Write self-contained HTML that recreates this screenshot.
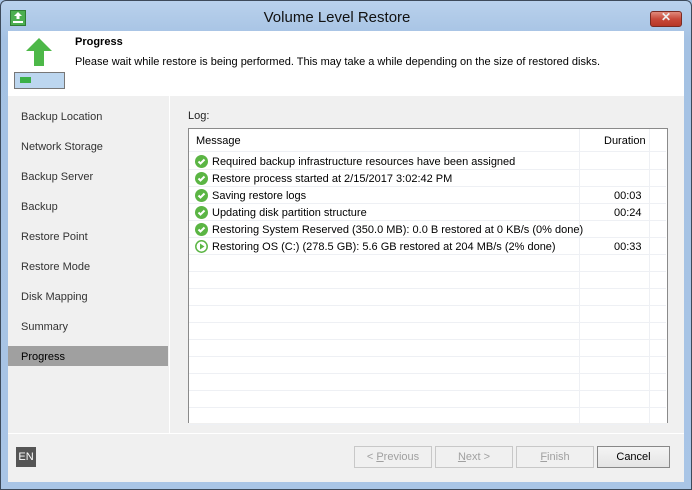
<!DOCTYPE html>
<html><head><style>
*{margin:0;padding:0;box-sizing:border-box}
body{width:692px;height:490px;font-family:"Liberation Sans",sans-serif;font-size:11px;color:#000;position:relative;overflow:hidden;background:#a9c5e6}
.a{position:absolute}
.frame{left:0;top:0;width:692px;height:490px;border:1px solid #3d4a5a;border-radius:6px 6px 0 0;background:linear-gradient(#b9d1ec,#a4c1e3 40px,#a9c5e6)}
.title{left:-9px;top:9px;width:692px;text-align:center;font-size:15px;color:#111}
.nav{left:21px;color:#333;font-size:11px}
.btn{top:446px;width:78px;height:22px;border:1px solid #c8c8c8;background:#f0f0f0;color:#a0a0a0;text-align:center;line-height:20px;font-size:11px}
.row{left:189px;width:477px;height:17px;border-bottom:1px solid #eef0f4}
.msg{left:212px;font-size:11px;line-height:17px;margin-top:1px}
.dur{left:614px;line-height:17px;margin-top:1px}
.ic{left:195px;width:13px;height:13px;border-radius:50%;background:#5bb544}
</style></head><body>
<div class="a frame"></div>
<div class="a" style="left:10px;top:10px;width:16px;height:16px;background:#4caf50;border:1px solid #2f7d34"></div>
<svg class="a" style="left:10px;top:10px" width="16" height="16"><path d="M8 2 L4 6 H6.5 V9 H9.5 V6 H12 Z" fill="#fff"/><rect x="3" y="11" width="10" height="2" fill="#fff"/></svg>
<div class="a title">Volume Level Restore</div>
<div class="a" style="left:650px;top:11px;width:32px;height:16px;border:1px solid #7a2a22;border-radius:3px;background:linear-gradient(#e08a7c,#c8493a 50%,#b73727)"></div>
<div class="a" style="left:650px;top:10px;width:32px;text-align:center;color:#eee;font-weight:bold;font-size:12px">✕</div>
<div class="a" style="left:8px;top:31px;width:676px;height:451px;background:#f0f0f0"></div>
<div class="a" style="left:8px;top:31px;width:676px;height:65px;background:#fff"></div>
<svg class="a" style="left:24px;top:37px" width="30" height="30"><path d="M15 1 L2 14 H10 V29 H20 V14 H28 Z" fill="#4db848"/></svg>
<div class="a" style="left:14px;top:72px;width:51px;height:17px;border:1px solid #777;background:#bcd6ef"></div>
<div class="a" style="left:20px;top:77px;width:11px;height:6px;background:#3bb048"></div>
<div class="a" style="left:75px;top:36px;font-weight:bold;font-size:11px">Progress</div>
<div class="a" style="left:75px;top:56px">Please wait while restore is being performed. This may take a while depending on the size of restored disks.</div>
<div class="a" style="left:169px;top:96px;width:1px;height:338px;background:#fff"></div>
<div class="a nav" style="top:111px">Backup Location</div>
<div class="a nav" style="top:141px">Network Storage</div>
<div class="a nav" style="top:171px">Backup Server</div>
<div class="a nav" style="top:201px">Backup</div>
<div class="a nav" style="top:231px">Restore Point</div>
<div class="a nav" style="top:261px">Restore Mode</div>
<div class="a nav" style="top:291px">Disk Mapping</div>
<div class="a nav" style="top:321px">Summary</div>
<div class="a" style="left:8px;top:346px;width:160px;height:20px;background:#a0a0a0"></div>
<div class="a nav" style="top:351px;color:#000">Progress</div>
<div class="a" style="left:188px;top:110px;color:#222">Log:</div>
<div class="a" style="left:188px;top:128px;width:480px;height:295px;border:1px solid #8a8a8a;border-bottom:none;background:#fff"></div>
<div class="a" style="left:579px;top:129px;width:1px;height:294px;background:#eef0f4"></div>
<div class="a" style="left:649px;top:129px;width:1px;height:294px;background:#eef0f4"></div>
<div class="a" style="left:189px;top:129px;width:477px;height:23px;border-bottom:1px solid #eef0f4"></div>
<div class="a" style="left:196px;top:135px">Message</div>
<div class="a" style="left:604px;top:135px">Duration</div>
<div class="a row" style="top:153px"></div><div class="a row" style="top:170px"></div><div class="a row" style="top:187px"></div><div class="a row" style="top:204px"></div><div class="a row" style="top:221px"></div><div class="a row" style="top:238px"></div><div class="a row" style="top:255px"></div><div class="a row" style="top:272px"></div><div class="a row" style="top:289px"></div><div class="a row" style="top:306px"></div><div class="a row" style="top:323px"></div><div class="a row" style="top:340px"></div><div class="a row" style="top:357px"></div><div class="a row" style="top:374px"></div><div class="a row" style="top:391px"></div><div class="a row" style="top:408px"></div>
<div class="a ic" style="top:155px"></div><div class="a ic" style="top:172px"></div><div class="a ic" style="top:189px"></div><div class="a ic" style="top:206px"></div><div class="a ic" style="top:223px"></div>
<svg class="a" style="left:195px;top:155px" width="13" height="90"><g fill="none" stroke="#fff" stroke-width="2"><path d="M3.5 6.5 L5.5 8.5 L9.5 4.5"/><path d="M3.5 23.5 L5.5 25.5 L9.5 21.5"/><path d="M3.5 40.5 L5.5 42.5 L9.5 38.5"/><path d="M3.5 57.5 L5.5 59.5 L9.5 55.5"/><path d="M3.5 74.5 L5.5 76.5 L9.5 72.5"/></g></svg>
<svg class="a" style="left:195px;top:240px" width="13" height="13"><circle cx="6.5" cy="6.5" r="5.7" fill="#fff" stroke="#5bb544" stroke-width="1.5"/><path d="M5 3.5 L9.5 6.5 L5 9.5Z" fill="#5bb544"/></svg>
<div class="a msg" style="top:153px">Required backup infrastructure resources have been assigned</div>
<div class="a msg" style="top:170px">Restore process started at 2/15/2017 3:02:42 PM</div>
<div class="a msg" style="top:187px">Saving restore logs</div>
<div class="a msg" style="top:204px">Updating disk partition structure</div>
<div class="a msg" style="top:221px">Restoring System Reserved (350.0 MB): 0.0 B restored at 0 KB/s (0% done)</div>
<div class="a msg" style="top:238px">Restoring OS (C:) (278.5 GB): 5.6 GB restored at 204 MB/s (2% done)</div>
<div class="a dur" style="top:187px">00:03</div>
<div class="a dur" style="top:204px">00:24</div>
<div class="a dur" style="top:238px">00:33</div>
<div class="a" style="left:8px;top:433px;width:676px;height:1px;background:#fff"></div>
<div class="a" style="left:16px;top:447px;width:20px;height:20px;background:#555;color:#fff;font-size:11px;text-align:center;line-height:20px">EN</div>
<div class="a btn" style="left:354px">&lt; <u>P</u>revious</div>
<div class="a btn" style="left:435px"><u>N</u>ext &gt;</div>
<div class="a btn" style="left:516px"><u>F</u>inish</div>
<div class="a btn" style="left:597px;width:73px;border-color:#888;background:linear-gradient(#f4f4f4,#e4e4e4);color:#000">Cancel</div>
</body></html>
